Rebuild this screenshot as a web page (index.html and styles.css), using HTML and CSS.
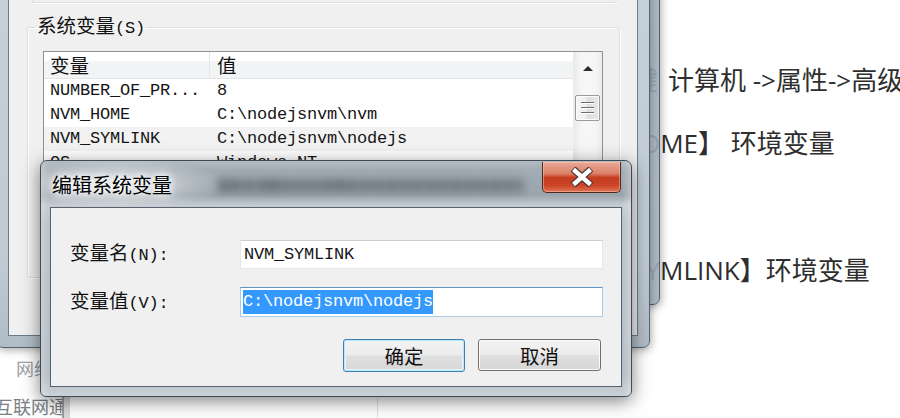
FILE: index.html
```html
<!DOCTYPE html>
<html lang="zh-CN">
<head>
<meta charset="utf-8">
<title>编辑系统变量</title>
<link rel="stylesheet" href="styles.css">
</head>
<body>
<div class="page">
  <div class="article">
    <p class="line l1"><span class="pre">右键</span><span>计算机 -&gt;属性-&gt;高级系统设置-&gt;环境变量</span></p>
    <p class="line l2"><span class="pre">新建【NVM_H</span><span>OME】 环境变量</span></p>
    <p class="line l3"><span class="pre">新建【NVM_SY</span><span>MLINK】环境变量</span></p>
  </div>
  <div class="lower">
    <div class="nav1">网络</div>
    <div class="nav2">
      <div class="nav2-text">互联网通信</div>
      <div class="nav2-bar"></div>
      <div class="nav2-rest"></div>
    </div>
  </div>
</div>

<div class="window sysprops"></div>

<div class="window envvars">
  <div class="env-client">
    <div class="user-group"></div>
    <fieldset class="sys-group">
      <legend>系统变量<span class="m">(S)</span></legend>
      <div class="listview">
        <div class="lv-main">
          <div class="lv-header">
            <div class="h1">变量</div>
            <div class="h2">值</div>
          </div>
          <div class="row"><div class="c1">NUMBER_OF_PR...</div><div class="c2">8</div></div>
          <div class="row"><div class="c1">NVM_HOME</div><div class="c2">C:\nodejsnvm\nvm</div></div>
          <div class="row hot"><div class="c1">NVM_SYMLINK</div><div class="c2">C:\nodejsnvm\nodejs</div></div>
          <div class="row"><div class="c1">OS</div><div class="c2">Windows_NT</div></div>
          <div class="row"><div class="c1">Path</div><div class="c2">C:\ProgramData\Oracle\Java\javapath;C:\Windows\system32</div></div>
          <div class="row"><div class="c1">PATHEXT</div><div class="c2">.COM;.EXE;.BAT;.CMD;.VBS;.VBE;.JS</div></div>
        </div>
        <div class="scrollbar">
          <div class="sb-up"><span class="sb-arrow"></span></div>
          <div class="sb-thumb"><div class="grip"></div></div>
        </div>
      </div>
    </fieldset>
  </div>
</div>

<div class="dialog">
  <div class="dlg-title">
    <span class="title-text">编辑系统变量</span>
    <div class="glass-blur"></div>
  </div>
  <div class="close-btn">
    <svg width="24" height="20" viewBox="0 0 24 20">
      <path d="M3 2 L21 18 M21 2 L3 18" stroke="#4a3530" stroke-width="7" fill="none"/>
      <path d="M3.5 2.5 L20.5 17.5 M20.5 2.5 L3.5 17.5" stroke="#ffffff" stroke-width="4.4" fill="none"/>
    </svg>
  </div>
  <div class="dlg-client">
    <div class="field-grid">
      <div class="label">变量名<span class="m">(N):</span></div>
      <div class="textbox tb1">NVM_SYMLINK</div>
      <div class="label">变量值<span class="m">(V):</span></div>
      <div class="textbox tb2 focused"><span class="sel">C:\nodejsnvm\nodejs</span></div>
    </div>
    <div class="btn-row">
      <div class="btn default">确定</div>
      <div class="btn cancel">取消</div>
    </div>
  </div>
</div>
</body>
</html>
```
FILE: styles.css
```css
* { box-sizing: border-box; }
html, body { margin: 0; padding: 0; }
body {
  width: 900px;
  height: 418px;
  overflow: hidden;
  position: relative;
  background: #ffffff;
  font-family: "Noto Sans CJK SC", sans-serif;
}

/* ---------- web page behind ---------- */
.page { width: 900px; height: 418px; overflow: hidden; }
.article {
  padding-top: 63px;
  font-family: "Open Sans", "Noto Sans CJK SC", sans-serif;
  font-size: 26px;
  line-height: 34px;
  color: #2e2e2e;
  white-space: nowrap;
}
.line { margin: 0; height: 34px; }
.l2 { margin-top: 29px; }
.l3 { margin-top: 93px; }
.pre { display: inline-block; text-align: right; }
.l1 .pre { width: 668px; padding-right: 10px; }
.l2 .pre { width: 640px; }
.l3 .pre { width: 660px; }

.lower {
  margin-top: 68px;
  font-size: 18px;
  line-height: 26px;
}
.nav1 { padding-left: 16px; color: #9aa2a8; height: 26px; }
.nav2 { display: flex; margin-top: 12px; height: 25px; }
.nav2-text {
  width: 62px;
  overflow: hidden;
  white-space: nowrap;
  text-indent: -5px;
  color: #7a7f84;
}
.nav2-bar {
  width: 8px;
  background: linear-gradient(90deg, #9d9d9d 0 2px, #d9d9d9 2px 100%);
}
.nav2-rest {
  width: 308px;
  margin-top: 5px;
  border-right: 1px solid #e0e0e0;
}

/* ---------- background windows ---------- */
.window {
  position: absolute;
  border: 1px solid #56626d;
  box-shadow: 1px 2px 8px rgba(0, 0, 0, 0.35);
}
.sysprops {
  left: -30px;
  top: -60px;
  width: 690px;
  height: 365px;
  border-radius: 0 0 7px 7px;
  background: linear-gradient(90deg, rgba(196, 207, 216, 0.86) 0%, rgba(186, 199, 209, 0.86) 97%, rgba(160, 174, 186, 0.9) 100%);
}
.envvars {
  left: -4px;
  top: -52px;
  width: 654px;
  height: 400px;
  padding: 11px;
  border-radius: 0 0 7px 7px;
  background: linear-gradient(180deg, #c7d1d9 0%, #bfcad3 80%, #b0bcc6 100%);
}
.env-client {
  height: 100%;
  background: #f0f0f0;
  border: 1px solid #6d7b88;
}
.user-group {
  margin-left: 23px;
  width: 585px;
  height: 42px;
  border: 1px solid #d5dfe5;
  border-top: none;
  border-radius: 0 0 3px 3px;
  box-shadow: 1px 1px 0 #ffffff;
}
.sys-group {
  margin: 10px 0 0 18px;
  width: 593px;
  height: 265px;
  padding: 0;
  border: 1px solid #d5dfe5;
  border-radius: 3px;
  box-shadow: 1px 1px 0 #ffffff, inset 1px 1px 0 #ffffff;
}
.sys-group legend {
  margin-left: 7px;
  padding: 0 2px;
  font-size: 19.5px;
  line-height: 24px;
  color: #111;
}
.m {
  font-family: "Liberation Mono", monospace;
  font-size: 17px;
  letter-spacing: -0.2px;
}

.listview {
  display: flex;
  margin: 10px 0 0 15px;
  width: 560px;
  height: 220px;
  border: 1px solid #8e9196;
  background: #ffffff;
  overflow: hidden;
}
.lv-main { width: 529px; }
.lv-header {
  display: flex;
  height: 27px;
  border-bottom: 1px solid #e3e4e6;
  background: linear-gradient(180deg, #ffffff 0 35%, #f3f4f5 35% 100%);
  font-size: 19.5px;
  line-height: 26px;
  color: #111;
}
.h1 { width: 166px; padding-left: 6px; border-right: 1px solid #e4e5e7; }
.h2 { padding-left: 7px; }
.row {
  display: flex;
  height: 24px;
  line-height: 24px;
  font-family: "Liberation Mono", monospace;
  font-size: 17px;
  letter-spacing: -0.2px;
  color: #151515;
  white-space: nowrap;
}
.row.hot { background: #f2f2f2; }
.row .c1 { width: 166px; padding-left: 6px; }
.row .c2 { padding-left: 7px; overflow: hidden; }

.scrollbar {
  width: 29px;
  border-left: 1px solid #ececec;
  background: linear-gradient(90deg, #eaeaea 0%, #f6f6f6 25%, #f6f6f6 75%, #ececec 100%);
}
.sb-up {
  height: 32px;
  display: flex;
  align-items: center;
  justify-content: center;
}
.sb-arrow {
  width: 0;
  height: 0;
  border-left: 5px solid transparent;
  border-right: 5px solid transparent;
  border-bottom: 5px solid #2c2c2c;
}
.sb-thumb {
  margin: 11px 2px 0 1px;
  height: 26px;
  border: 1px solid #9a9a9a;
  border-radius: 2px;
  background: linear-gradient(90deg, #f6f6f6 0%, #ececec 50%, #dedede 50%, #e6e6e6 100%);
  box-shadow: inset 0 0 0 1px #fbfbfb;
  padding-top: 6px;
}
.grip {
  margin: 0 auto;
  width: 13px;
  height: 12px;
  background: repeating-linear-gradient(180deg, #6e6e6e 0 1px, #ffffff 1px 2px, transparent 2px 5px);
}

/* ---------- edit dialog ---------- */
.dialog {
  position: absolute;
  left: 40px;
  top: 160px;
  width: 592px;
  height: 237px;
  border: 1px solid #3f4a54;
  border-radius: 7px 7px 6px 6px;
  padding: 0 9px 9px;
  display: flex;
  flex-direction: column;
  background:
    radial-gradient(ellipse 110px 26px at 75px 23px, rgba(255, 255, 255, 0.7), rgba(255, 255, 255, 0)),
    linear-gradient(90deg, rgba(255, 255, 255, 0.25) 0, rgba(255, 255, 255, 0) 9px, rgba(255, 255, 255, 0) 581px, rgba(255, 255, 255, 0.3) 590px),
    linear-gradient(180deg, #b3bcc3 0, #a2acb4 9px, #9aa4ac 34px, #c4cbd1 44px, #b9c2c9 60px, #b3bdc5 215px, #cbd2d7 236px);
  box-shadow: 0 4px 18px rgba(0, 0, 0, 0.5);
}
.dlg-title {
  height: 46px;
  display: flex;
  align-items: center;
  padding-left: 2px;
}
.title-text {
  font-size: 20px;
  color: #000;
  text-shadow: 0 0 6px #ffffff, 0 0 10px #ffffff, 0 0 14px rgba(255, 255, 255, 0.8);
}
.glass-blur {
  margin-left: 46px;
  margin-top: 2px;
  width: 305px;
  height: 13px;
  background:
    linear-gradient(90deg, rgba(70, 78, 86, 0.15) 0 20px, transparent 20px 45px, rgba(70, 78, 86, 0.2) 45px 62px, transparent 62px 110px, rgba(70, 78, 86, 0.15) 110px 130px, transparent 130px),
    repeating-linear-gradient(90deg, rgba(70, 78, 86, 0.55) 0 9px, rgba(70, 78, 86, 0.25) 9px 13px);
  filter: blur(4px);
}
.close-btn {
  position: absolute;
  top: 1px;
  right: 10px;
  width: 79px;
  height: 31px;
  border: 1px solid #50291f;
  border-top: none;
  border-radius: 0 0 5px 5px;
  display: flex;
  align-items: center;
  justify-content: center;
  background: linear-gradient(180deg, #e9a896 0%, #dc8169 38%, #c53d20 52%, #cc4427 78%, #e07556 100%);
  box-shadow: inset 0 0 0 1px rgba(255, 210, 190, 0.45);
}
.dlg-client {
  flex: 1;
  background: #f0f0f0;
  border: 1px solid #56626d;
  padding: 30px 18px 0 19px;
}
.field-grid {
  display: grid;
  grid-template-columns: 1fr 363px;
  row-gap: 16px;
  align-items: center;
}
.label {
  font-size: 19.5px;
  color: #111;
  line-height: 28px;
}
.textbox {
  height: 29px;
  background: #ffffff;
  border: 1px solid #e3e8ed;
  border-top-color: #c9ced4;
  padding-left: 3px;
  font-family: "Liberation Mono", monospace;
  font-size: 17px;
  letter-spacing: -0.2px;
  line-height: 27px;
  color: #151515;
  white-space: nowrap;
}
.tb2 { height: 30px; padding-left: 2px; padding-top: 2px; line-height: 24px; }
.focused {
  border-color: #a9cbe6;
  border-top-color: #5d94c4;
}
.sel {
  display: inline-block;
  height: 24px;
  line-height: 24px;
  background: #3399ff;
  color: #ffffff;
}
.btn-row {
  display: flex;
  justify-content: flex-end;
  gap: 13px;
  margin-top: 21px;
  padding-right: 2px;
}
.btn {
  display: flex;
  align-items: center;
  justify-content: center;
  height: 33px;
  border-radius: 3px;
  font-size: 19.5px;
  color: #111;
  border: 1px solid #707070;
  background: linear-gradient(180deg, #f3f3f3 0%, #ececec 48%, #e0e0e0 52%, #d6d6d6 100%);
  box-shadow: inset 0 0 0 1px #fbfbfb;
}
.btn.default {
  width: 122px;
  border-color: #3c7fb1;
  box-shadow: inset 0 0 0 1px #bfe6f8, inset 0 0 0 2px #e4f4fc;
}
.btn.cancel { width: 123px; height: 32px; }
```
